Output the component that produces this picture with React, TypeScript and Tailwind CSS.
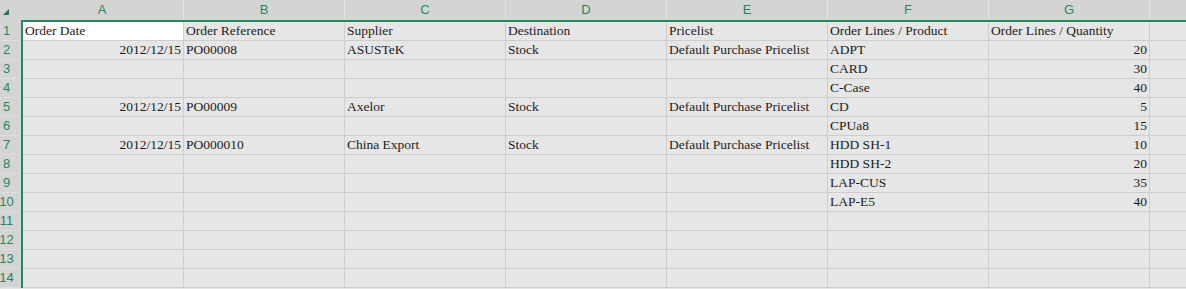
import React from 'react';

const columns = ['A', 'B', 'C', 'D', 'E', 'F', 'G'];

type Row = (string | number)[];

const rows: Row[] = [
  ['Order Date', 'Order Reference', 'Supplier', 'Destination', 'Pricelist', 'Order Lines / Product', 'Order Lines / Quantity'],
  ['2012/12/15', 'PO00008', 'ASUSTeK', 'Stock', 'Default Purchase Pricelist', 'ADPT', 20],
  ['', '', '', '', '', 'CARD', 30],
  ['', '', '', '', '', 'C-Case', 40],
  ['2012/12/15', 'PO00009', 'Axelor', 'Stock', 'Default Purchase Pricelist', 'CD', 5],
  ['', '', '', '', '', 'CPUa8', 15],
  ['2012/12/15', 'PO000010', 'China Export', 'Stock', 'Default Purchase Pricelist', 'HDD SH-1', 10],
  ['', '', '', '', '', 'HDD SH-2', 20],
  ['', '', '', '', '', 'LAP-CUS', 35],
  ['', '', '', '', '', 'LAP-E5', 40],
  ['', '', '', '', '', '', ''],
  ['', '', '', '', '', '', ''],
  ['', '', '', '', '', '', ''],
  ['', '', '', '', '', '', '']
];

// dates and quantities sit on the right like numbers do in a sheet
const alignRight = (rowIndex: number, colIndex: number) =>
  rowIndex > 0 && (colIndex === 0 || colIndex === 6);

export default function App() {
  return (
    <div className="h-[289px] w-[1186px] overflow-hidden bg-[#e6e6e6] font-['Liberation_Serif',serif] text-[13.5px] text-[#1c1c1c]">
      {/* column letters */}
      <div className="flex h-[20px] bg-[#d4d4d4] font-['Liberation_Sans',sans-serif] text-[13px] text-[#1f8a5b]">
        <div className="flex w-[21px] items-end pb-[4px] pl-[2px]">
          <svg width="8" height="8" viewBox="0 0 8 8">
            <polygon points="7,1 7,7 1,7" fill="#2c6e50" />
          </svg>
        </div>
        {columns.map((col, i) => (
          <div
            key={col}
            className={`flex items-center justify-center border-r border-[#e2e2e2] ${i === 0 ? 'w-[163px]' : 'w-[161px]'}`}
          >
            {col}
          </div>
        ))}
        <div className="flex-1" />
      </div>

      {/* green selection edge under the header */}
      <div className="flex h-[2px]">
        <div className="w-[21px] bg-[#d4d4d4]" />
        <div className="flex-1 bg-[#1f8a5b]" />
      </div>

      <div className="flex">
        {/* row numbers */}
        <div className="w-[21px] bg-[#d4d4d4] font-['Liberation_Sans',sans-serif] text-[13px] text-[#1f8a5b]">
          {rows.map((_, i) => (
            <div key={i} className="h-[19px] overflow-hidden border-b border-[#dedede]">
              <div className="flex h-full w-[13px] items-center justify-center">
                {i + 1}
              </div>
            </div>
          ))}
        </div>
        <div className="w-[2px] bg-[#1f8a5b]" />

        {/* cells */}
        <div className="flex-1">
          {rows.map((row, r) => (
            <div key={r} className="flex h-[19px]">
              {row.map((value, c) => (
                <div
                  key={c}
                  className={`flex w-[161px] items-center overflow-hidden whitespace-nowrap border-r border-b border-[#cdcdcd] px-[2px] ${
                    alignRight(r, c) ? 'justify-end' : 'justify-start'
                  } ${r === 0 && c === 0 ? 'bg-white' : ''}`}
                >
                  {value}
                </div>
              ))}
              <div className="flex-1 border-b border-[#cdcdcd]" />
            </div>
          ))}
        </div>
      </div>
    </div>
  );
}
